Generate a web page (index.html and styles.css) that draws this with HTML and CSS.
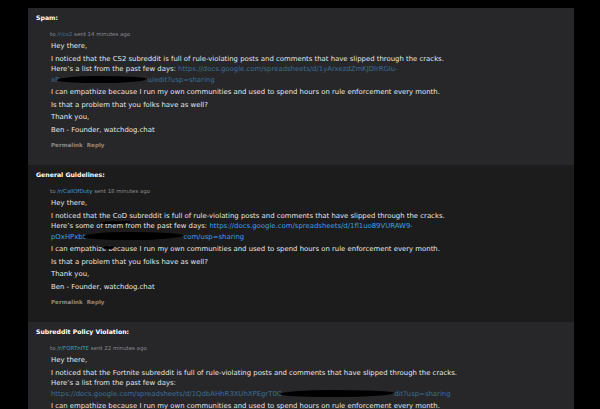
FILE: index.html
```html
<!DOCTYPE html>
<html>
<head>
<meta charset="utf-8">
<link rel="stylesheet" href="styles.css">
</head>
<body>
<div class="panel">
  <section class="msg msg-light">
    <h2 class="subject">Spam:</h2>
    <div class="entry">
      <p class="meta">to <a class="sr sr-muted" href="#">/r/cs2</a> sent 14 minutes ago</p>
      <div class="md">
        <p>Hey there,</p>
        <p>I noticed that the CS2 subreddit is full of rule-violating posts and comments that have slipped through the cracks.<br>Here’s a list from the past few days: <a class="lnk lnk-muted" href="#">https://docs.google.com/spreadsheets/d/1yArxezdZmKJDlrRGIu-</a><br><a class="lnk lnk-muted" href="#">xP</a><span class="redact r1"></span><a class="lnk lnk-muted" href="#">u/edit?usp=sharing</a></p>
        <p>I can empathize because I run my own communities and used to spend hours on rule enforcement every month.</p>
        <p>Is that a problem that you folks have as well?</p>
        <p>Thank you,</p>
        <p>Ben - Founder, watchdog.chat</p>
      </div>
      <ul class="buttons"><li>Permalink</li><li>Reply</li></ul>
    </div>
  </section>

  <section class="msg msg-dark">
    <h2 class="subject">General Guidelines:</h2>
    <div class="entry">
      <p class="meta">to <a class="sr" href="#">/r/CallOfDuty</a> sent 18 minutes ago</p>
      <div class="md">
        <p>Hey there,</p>
        <p>I noticed that the CoD subreddit is full of rule-violating posts and comments that have slipped through the cracks.<br>Here’s some <span class="scribble s-them">of them</span> from the past few days: <a class="lnk" href="#">https://docs.google.com/spreadsheets/d/1fl1uo89VURAW9-</a><br><a class="lnk" href="#">pOxHPxbt</a><span class="redact r2"></span><a class="lnk" href="#">com/usp=sharing</a></p>
        <p>I can empathiz<span class="scribble s-b">e b</span>ecause I run my own communities and used to spend hours on rule enforcement every month.</p>
        <p>Is that a problem that you folks have as well?</p>
        <p>Thank you,</p>
        <p>Ben - Founder, watchdog.chat</p>
      </div>
      <ul class="buttons"><li>Permalink</li><li>Reply</li></ul>
    </div>
  </section>

  <section class="msg msg-light">
    <h2 class="subject">Subreddit Policy Violation:</h2>
    <div class="entry">
      <p class="meta">to <a class="sr" href="#">/r/FORTnITE</a> sent 22 minutes ago</p>
      <div class="md">
        <p>Hey there,</p>
        <p>I noticed that the Fortnite subreddit is full of rule-violating posts and comments that have slipped through the cracks.<br>Here’s a list from the past few days:<br><a class="lnk lnk-muted" href="#">https://docs.google.com/spreadsheets/d/1QdbAHhR3XUhXPEgrT0G</a><span class="redact r3"></span><a class="lnk lnk-muted" href="#">dit?usp=sharing</a></p>
        <p>I can empathize because I run my own communities and used to spend hours on rule enforcement every month.</p>
        <p>Is that a problem that you folks have as well?</p>
        <p>Thank you,</p>
        <p>Ben - Founder, watchdog.chat</p>
      </div>
      <ul class="buttons"><li>Permalink</li><li>Reply</li></ul>
    </div>
  </section>
</div>
</body>
</html>
```

FILE: styles.css
```css
html, body {
  margin: 0;
  padding: 0;
  background: #000;
  height: 100%;
  overflow: hidden;
}

body {
  font-family: "DejaVu Sans", Verdana, sans-serif;
  color: #e6e6e6;
}

.panel {
  margin: 8px 0 0 28px;
  width: 546px;
}

.msg {
  padding: 5px 8px 14px 8px;
  height: 157px;
  box-sizing: border-box;
}

.msg-light { background: #27272a; }
.msg-dark { background: #1c1c1c; }

.subject {
  margin: 0;
  font-size: 6.2px;
  line-height: 10px;
  font-weight: bold;
  color: #fff;
}

.entry {
  margin-left: 15px;
  margin-top: 7px;
}

.meta {
  margin: 0 0 3px -1px;
  font-size: 5.45px;
  line-height: 8px;
  color: #8a8a8a;
}

.sr { color: #3e9ede; text-decoration: none; }
.sr-muted { color: #3b6f99; }

.md p {
  margin: 0 0 2px 0;
  font-size: 6.9px;
  line-height: 10.5px;
  white-space: nowrap;
}

.lnk { color: #3c9fe2; text-decoration: none; }
.lnk-muted { color: #3a6e98; }

.redact {
  display: inline-block;
  height: 7px;
  vertical-align: -1px;
  background: #000;
  border-radius: 45% 55% 50% 40% / 60% 40% 60% 40%;
}
.r1 { width: 90px; margin-left: -2px; }
.r2 { width: 100px; height: 8px; margin-left: -2px; }
.r3 { width: 114px; margin-left: -2px; }

.scribble { position: relative; }
.scribble::after {
  content: "";
  position: absolute;
  background: #000;
  border-radius: 50%;
}
.s-them::after { left: 4px; right: -8px; top: -1px; height: 3px; transform: rotate(-2deg); }
.s-b::after { left: 1px; right: -1px; top: 1px; height: 3px; }

.buttons {
  list-style: none;
  margin: 6px 0 0 0;
  padding: 0;
  display: flex;
  gap: 4px;
  font-size: 5.6px;
  line-height: 8px;
  font-weight: bold;
  color: #8a8a8a;
}
```
